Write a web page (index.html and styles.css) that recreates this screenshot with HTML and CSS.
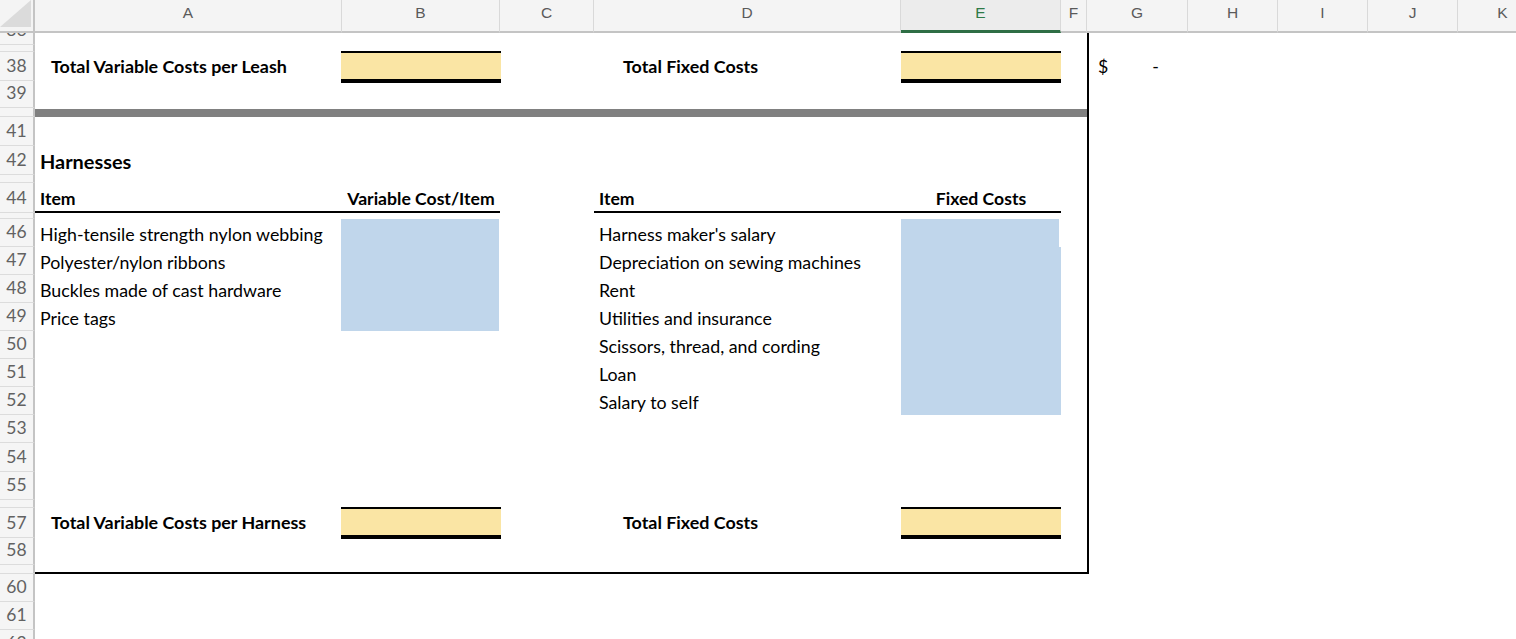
FILE: index.html
```html
<!DOCTYPE html>
<html lang="en">
<head>
<meta charset="utf-8">
<title>Harnesses cost sheet</title>
<link rel="stylesheet" href="styles.css">
</head>
<body>
<div class="sheet">
  <div class="row hdr">
    <div class="corner"><svg width="31" height="27" viewBox="0 0 31 27"><polygon points="0,27 31,0 31,27" fill="#dbdbdb"/></svg></div>
    <div>A</div><div>B</div><div>C</div><div>D</div><div class="sel">E</div><div>F</div><div>G</div><div>H</div><div>I</div><div>J</div><div>K</div>
  </div>

  <div class="row h12"><div class="rh">36</div><div class="f"></div></div>
  <div class="row h7"><div class="rh"></div><div class="f"></div></div>
  <div class="row h29">
    <div class="rh">38</div>
    <div class="t tot ca">Total Variable Costs per Leash</div>
    <div class="tan cb"></div>
    <div class="t tot td cd">Total Fixed Costs</div>
    <div class="tan te ce"></div>
    <div class="f"></div>
    <div class="t dollar cg"><span>$</span><span>-</span></div>
  </div>
  <div class="row h27"><div class="rh">39</div><div class="f"></div></div>
  <div class="row h9"><div class="rh"></div><div class="band"></div></div>
  <div class="row h29"><div class="rh">41</div><div class="f"></div></div>
  <div class="row h29"><div class="rh">42</div><div class="t bold title ca">Harnesses</div><div class="f"></div></div>
  <div class="row h8"><div class="rh"></div><div class="f"></div></div>
  <div class="row h30">
    <div class="rh">44</div>
    <div class="t bold ul ca">Item</div>
    <div class="t bold ul ctr cb">Variable Cost/Item</div>
    <div class="t bold ul cd">Item</div>
    <div class="t bold ul ctr ce">Fixed Costs</div>
    <div class="f"></div>
  </div>
  <div class="row h6"><div class="rh"></div><div class="f"></div></div>
  <div class="row h28">
    <div class="rh">46</div>
    <div class="t ca">High-tensile strength nylon webbing</div>
    <div class="blue bb cb"></div>
    <div class="t cd">Harness maker's salary</div>
    <div class="blue be1 ce"></div>
    <div class="f"></div>
  </div>
  <div class="row h28">
    <div class="rh">47</div>
    <div class="t ca">Polyester/nylon ribbons</div>
    <div class="blue bb cb"></div>
    <div class="t cd">Depreciation on sewing machines</div>
    <div class="blue ce"></div>
    <div class="f"></div>
  </div>
  <div class="row h28">
    <div class="rh">48</div>
    <div class="t ca">Buckles made of cast hardware</div>
    <div class="blue bb cb"></div>
    <div class="t cd">Rent</div>
    <div class="blue ce"></div>
    <div class="f"></div>
  </div>
  <div class="row h28">
    <div class="rh">49</div>
    <div class="t ca">Price tags</div>
    <div class="blue bb cb"></div>
    <div class="t cd">Utilities and insurance</div>
    <div class="blue ce"></div>
    <div class="f"></div>
  </div>
  <div class="row h28">
    <div class="rh">50</div>
    <div class="t cd">Scissors, thread, and cording</div>
    <div class="blue ce"></div>
    <div class="f"></div>
  </div>
  <div class="row h28">
    <div class="rh">51</div>
    <div class="t cd">Loan</div>
    <div class="blue ce"></div>
    <div class="f"></div>
  </div>
  <div class="row h28">
    <div class="rh">52</div>
    <div class="t cd">Salary to self</div>
    <div class="blue ce"></div>
    <div class="f"></div>
  </div>
  <div class="row h28"><div class="rh">53</div><div class="f"></div></div>
  <div class="row h29"><div class="rh">54</div><div class="f"></div></div>
  <div class="row h28"><div class="rh">55</div><div class="f"></div></div>
  <div class="row h8"><div class="rh"></div><div class="f"></div></div>
  <div class="row h30">
    <div class="rh">57</div>
    <div class="t tot tot2 ca">Total Variable Costs per Harness</div>
    <div class="tan cb"></div>
    <div class="t tot tot2 td cd">Total Fixed Costs</div>
    <div class="tan te ce"></div>
    <div class="f"></div>
  </div>
  <div class="row h27"><div class="rh">58</div><div class="f"></div></div>
  <div class="row h9"><div class="rh"></div><div class="bottom"></div></div>
  <div class="row h28"><div class="rh">60</div></div>
  <div class="row h28"><div class="rh">61</div></div>
  <div class="row h28"><div class="rh">62</div></div>
</div>
</body>
</html>
```
FILE: styles.css
```css
html, body {
  margin: 0;
  padding: 0;
  background: #fff;
  overflow: hidden;
}
body {
  width: 1516px;
  height: 639px;
  font-family: Lato, "Liberation Sans", sans-serif;
  color: #000;
}
.sheet {
  width: 1548px;
}
.row {
  display: grid;
  grid-template-columns: 35px 307px 158px 94px 307px 160px 26px 101px 90px 90px 90px 90px;
  grid-template-rows: 100%;
}
.row > div {
  box-sizing: border-box;
  min-width: 0;
}
.h6 { height: 6px; }
.h7 { height: 7px; }
.h8 { height: 8px; }
.h9 { height: 9px; }
.h12 { height: 12px; }
.h27 { height: 27px; }
.h28 { height: 28px; }
.h29 { height: 29px; }
.h30 { height: 30px; }

/* column header */
.hdr { height: 33px; }
.hdr > div {
  height: 33px;
  background: #f4f4f4;
  border-right: 1px solid #d9d9d9;
  border-bottom: 2px solid #c4c4c4;
  font-family: "Liberation Sans", Arial, sans-serif;
  font-size: 15.5px;
  line-height: 17px;
  padding-top: 4px;
  text-align: center;
  color: #5a5a5a;
}
.hdr > .corner {
  padding: 0;
  border-right: 2px solid #c4c4c4;
}
.corner svg { display: block; }
.hdr > .sel {
  background: #ececec;
  color: #2f7a47;
  border-bottom: 3px solid #2e6e45;
}

/* row header */
.rh {
  grid-column: 1;
  background: #f5f5f5;
  border-right: 2px solid #c4c4c4;
  border-bottom: 1px solid #dcdcdc;
  display: flex;
  justify-content: center;
  align-items: flex-end;
  padding-bottom: 4px;
  font-size: 17.5px;
  line-height: 20px;
  color: #626262;
  overflow: hidden;
}

/* column placement */
.ca { grid-column: 2; }
.cb { grid-column: 3; }
.cd { grid-column: 5; }
.ce { grid-column: 6; }
.f { grid-column: 7; box-shadow: 2px 0 0 #000; }
.cg { grid-column: 8; }

/* text cells */
.t {
  display: flex;
  align-items: flex-end;
  padding: 0 0 3px 5px;
  font-size: 17.8px;
  line-height: 20px;
  white-space: nowrap;
}
.bold { font-weight: 700; font-size: 17.6px; }
.title { font-size: 19.9px; padding-bottom: 4px; }
.ul {
  border-bottom: 2px solid #000;
  padding-bottom: 2px;
}
.ctr {
  justify-content: center;
  padding-left: 0;
}
.tot {
  font-weight: 700;
  font-size: 17.9px;
  padding-left: 16px;
  padding-bottom: 5px;
}
.tot2 { padding-bottom: 6px; }
.td { padding-left: 29px; }
.dollar {
  padding-left: 11px;
  padding-bottom: 5px;
  gap: 44px;
}

/* fills */
.tan {
  align-self: start;
  height: 32px;
  margin: -1px -1px 0 -1px;
  background: #fae5a4;
  border-top: 2px solid #000;
  border-bottom: 4px solid #000;
}
.tan.te { margin: -1px 0 0 0; }
.blue { background: #c0d6eb; }
.blue.bb { margin: 0 1px 0 -1px; }
.blue.be1 { margin-right: 2px; }

.band {
  grid-column: 2 / 8;
  border-top: 1px solid #fff;
  background: #808080;
  box-shadow: 2px 0 0 #000;
}
.bottom {
  grid-column: 2 / 8;
  border-bottom: 2px solid #000;
  box-shadow: 2px 0 0 #000;
}
```
